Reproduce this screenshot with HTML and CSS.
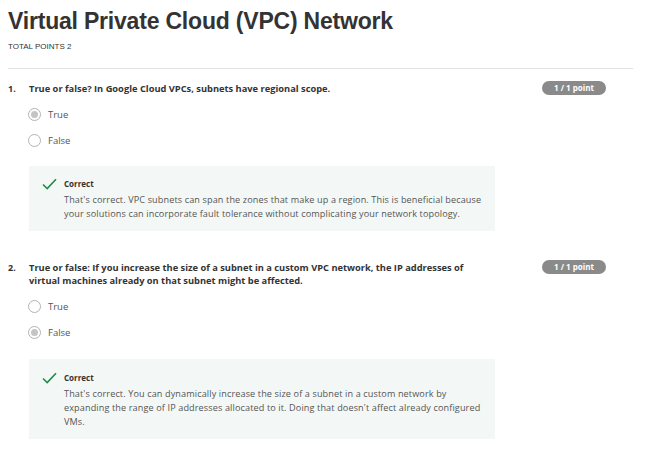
FILE: index.html
```html
<!DOCTYPE html>
<html lang="en">
<head>
<meta charset="utf-8">
<title>Virtual Private Cloud (VPC) Network</title>
<link rel="stylesheet" href="styles.css">
</head>
<body>
<div class="page">
  <h1 class="title">Virtual Private Cloud (VPC) Network</h1>
  <div class="total">TOTAL POINTS 2</div>
  <div class="divider"></div>
  <ol class="questions">
    <li class="question q1">
      <div class="q-head">
        <span class="q-num">1.</span>
        <div class="q-text">True or false? In Google Cloud VPCs, subnets have regional scope.</div>
        <span class="badge">1 / 1 point</span>
      </div>
      <div class="options">
        <div class="option"><span class="radio checked"></span><span class="label">True</span></div>
        <div class="option"><span class="radio"></span><span class="label">False</span></div>
      </div>
      <div class="feedback">
        <svg class="check" viewBox="0 0 15 12" width="15" height="12"><path d="M1 6.5 L5.2 10.5 L14 1.2" fill="none" stroke="#1f8a4c" stroke-width="1.6"/></svg>
        <div class="fb-body">
          <div class="fb-title">Correct</div>
          <div class="fb-text">That's correct. VPC subnets can span the zones that make up a region. This is beneficial because your solutions can incorporate fault tolerance without complicating your network topology.</div>
        </div>
      </div>
    </li>
    <li class="question q2">
      <div class="q-head">
        <span class="q-num">2.</span>
        <div class="q-text">True or false: If you increase the size of a subnet in a custom VPC network, the IP addresses of virtual machines already on that subnet might be affected.</div>
        <span class="badge">1 / 1 point</span>
      </div>
      <div class="options">
        <div class="option"><span class="radio"></span><span class="label">True</span></div>
        <div class="option"><span class="radio checked"></span><span class="label">False</span></div>
      </div>
      <div class="feedback">
        <svg class="check" viewBox="0 0 15 12" width="15" height="12"><path d="M1 6.5 L5.2 10.5 L14 1.2" fill="none" stroke="#1f8a4c" stroke-width="1.6"/></svg>
        <div class="fb-body">
          <div class="fb-title">Correct</div>
          <div class="fb-text">That's correct. You can dynamically increase the size of a subnet in a custom network by expanding the range of IP addresses allocated to it. Doing that doesn't affect already configured VMs.</div>
        </div>
      </div>
    </li>
  </ol>
</div>
</body>
</html>
```

FILE: styles.css
```css
html, body {
  margin: 0;
  padding: 0;
  background: #ffffff;
}

.page {
  width: 625px;
  padding-left: 8px;
  font-family: "Open Sans", "DejaVu Sans", sans-serif;
  color: #333333;
}

.title {
  margin: 7px 0 0 0;
  font-family: "Liberation Sans", Arial, sans-serif;
  font-weight: bold;
  font-size: 23px;
  line-height: 28px;
  color: #333333;
  letter-spacing: -0.2px;
}

.total {
  margin-top: 7px;
  font-family: "Liberation Sans", Arial, sans-serif;
  font-size: 8px;
  line-height: 10px;
  color: #333333;
}

.divider {
  margin-top: 16px;
  height: 1px;
  background: #e2e2e2;
}

.questions {
  list-style: none;
  margin: 0;
  padding: 0;
}

.question {
  padding-top: 12px;
}

.q2 {
  padding-top: 29px;
}

.q-head {
  display: flex;
  align-items: flex-start;
}

.q-num {
  width: 21px;
  flex: none;
  font-size: 9px;
  font-weight: bold;
  line-height: 13px;
  padding-top: 1px;
  color: #333333;
}

.q-text {
  width: 466px;
  flex: none;
  font-size: 9.3px;
  font-weight: bold;
  line-height: 13px;
  padding-top: 1px;
  color: #333333;
}

.badge {
  margin-left: auto;
  margin-right: 27px;
  width: 64px;
  height: 14px;
  border-radius: 7px;
  background: #8a8a8a;
  color: #ffffff;
  font-size: 8px;
  font-weight: bold;
  line-height: 14px;
  text-align: center;
}

.options {
  margin-top: 6px;
  padding-left: 20px;
}

.option {
  display: flex;
  align-items: center;
  height: 26px;
}

.radio {
  box-sizing: border-box;
  width: 13px;
  height: 13px;
  border: 1px solid #b3b3b3;
  border-radius: 50%;
  background: #ffffff;
  display: flex;
  align-items: center;
  justify-content: center;
}

.radio.checked::after {
  content: "";
  width: 7px;
  height: 7px;
  border-radius: 50%;
  background: #c4c4c4;
}

.label {
  margin-left: 7px;
  font-size: 9.5px;
  color: #555555;
}

.feedback {
  margin: 13px 0 0 21px;
  width: 466px;
  box-sizing: border-box;
  background: #f3f8f6;
  padding: 11px 4px 10px 13px;
  display: flex;
  align-items: flex-start;
}

.q2 .feedback {
  margin-top: 14px;
  padding-top: 12px;
}

.check {
  flex: none;
  margin-top: 1px;
}

.fb-body {
  margin-left: 7px;
}

.fb-title {
  font-size: 8px;
  font-weight: bold;
  line-height: 14px;
  color: #333333;
}

.fb-text {
  margin-top: 2px;
  font-size: 9.1px;
  letter-spacing: 0.12px;
  line-height: 14px;
  color: #555555;
}
```
